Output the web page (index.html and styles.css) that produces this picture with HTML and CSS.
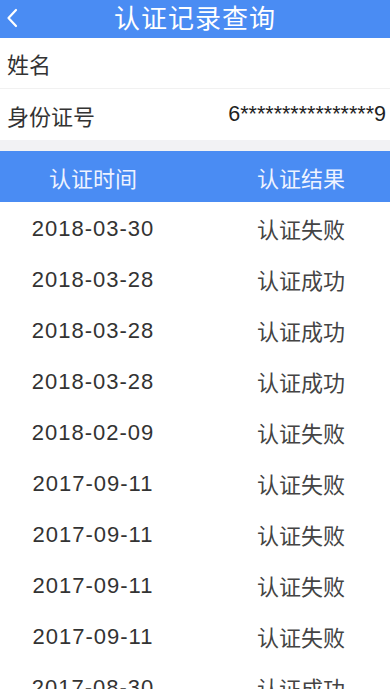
FILE: index.html
```html
<!DOCTYPE html>
<html lang="zh">
<head>
<meta charset="utf-8">
<link rel="stylesheet" href="styles.css">
</head>
<body>
<div class="page">
  <header class="nav">
    <span class="back"><svg width="12" height="20" viewBox="0 0 12 20"><path d="M10 2 L2.5 10 L10 18" fill="none" stroke="#fff" stroke-width="2.2" stroke-linecap="round" stroke-linejoin="round"/></svg></span>
    <h1 class="title">认证记录查询</h1>
  </header>
  <div class="info">
    <div class="info-row"><span class="label">姓名</span><span class="value"></span></div>
    <div class="info-row"><span class="label">身份证号</span><span class="value id">6****************9</span></div>
  </div>
  <div class="gap"></div>
  <div class="table">
    <div class="thead"><span class="c1">认证时间</span><span class="c2">认证结果</span></div>
    <div class="row"><span class="c1 date">2018-03-30</span><span class="c2">认证失败</span></div>
    <div class="row"><span class="c1 date">2018-03-28</span><span class="c2">认证成功</span></div>
    <div class="row"><span class="c1 date">2018-03-28</span><span class="c2">认证成功</span></div>
    <div class="row"><span class="c1 date">2018-03-28</span><span class="c2">认证成功</span></div>
    <div class="row"><span class="c1 date">2018-02-09</span><span class="c2">认证失败</span></div>
    <div class="row"><span class="c1 date">2017-09-11</span><span class="c2">认证失败</span></div>
    <div class="row"><span class="c1 date">2017-09-11</span><span class="c2">认证失败</span></div>
    <div class="row"><span class="c1 date">2017-09-11</span><span class="c2">认证失败</span></div>
    <div class="row"><span class="c1 date">2017-09-11</span><span class="c2">认证失败</span></div>
    <div class="row"><span class="c1 date">2017-08-30</span><span class="c2">认证成功</span></div>
  </div>
</div>
</body>
</html>
```
FILE: styles.css
```css
html, body { margin: 0; padding: 0; }
body {
  width: 390px;
  height: 689px;
  overflow: hidden;
  background: #fff;
  font-family: "Liberation Sans", "Noto Sans CJK SC", sans-serif;
  color: #333;
}
.nav {
  height: 38px;
  background: #4a8cf3;
  display: flex;
  align-items: center;
  justify-content: center;
  position: relative;
}
.back {
  position: absolute;
  left: 6px;
  top: 8px;
  display: flex;
}
.title {
  margin: 0 0 4px 0;
  font-family: "Noto Sans CJK SC", sans-serif;
  font-weight: 400;
  font-size: 26px;
  letter-spacing: 1px;
  color: #fff;
  line-height: 1;
}
.info { background: #fff; }
.info-row {
  height: 50px;
  display: flex;
  align-items: center;
  justify-content: space-between;
  padding: 0 4px 0 7px;
  font-size: 22px;
  border-bottom: 1px solid #f1f1f1;
}
.info-row:last-child { border-bottom: none; height: 51px; }
.label { font-family: "Noto Sans CJK SC", sans-serif; color: #333; line-height: 1; }
.value.id { font-family: "Liberation Sans", sans-serif; font-size: 21.5px; color: #222; line-height: 1; }
.gap { height: 11px; background: #f2f2f4; }
.table { display: flex; flex-direction: column; }
.thead, .row {
  height: 51px;
  display: grid;
  grid-template-columns: 186px 1fr;
  align-items: center;
  font-size: 22px;
}
.thead {
  background: #4a8cf3;
  color: #eef3ff;
  font-family: "Noto Sans CJK SC", sans-serif;
}
.c1 { text-align: center; line-height: 1; }
.c2 { text-align: center; padding-left: 26px; line-height: 1; }
.row .c2 { font-family: "Noto Sans CJK SC", sans-serif; color: #444; }
.date { font-size: 22px; letter-spacing: 1px; color: #333; padding-top: 3px; }
```
